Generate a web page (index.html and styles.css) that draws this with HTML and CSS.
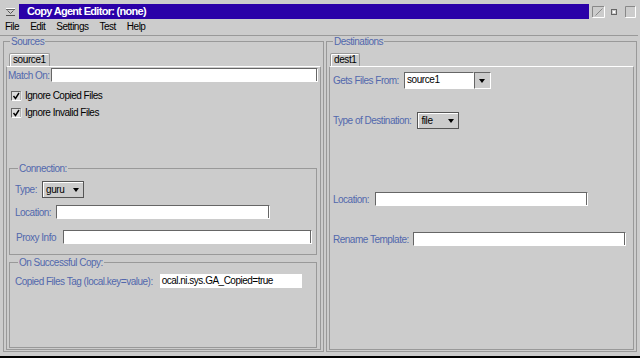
FILE: index.html
```html
<!DOCTYPE html>
<html>
<head>
<meta charset="utf-8">
<link rel="stylesheet" href="styles.css">
</head>
<body>
<div class="window">
  <div class="titlebar">
    <div class="winmenu">
      <svg width="19" height="20" viewBox="0 0 19 20">
        <path d="M6 8.5H15" stroke="#fff" fill="none"/>
        <path d="M6 9.5H15" stroke="#666" fill="none"/>
        <path d="M7.5 10.5L10.5 13.5L13.5 10.5" stroke="#555" fill="none"/>
        <path d="M6 15.5H15" stroke="#555" fill="none"/>
      </svg>
    </div>
    <div class="title">Copy Agent Editor: (none)</div>
    <div class="wbtns">
      <svg width="51" height="20" viewBox="0 0 51 20">
        <path d="M3.5 17V6.5H15" stroke="#888" fill="none"/>
        <path d="M15.5 6.5V17.5H3.5" stroke="#fff" fill="none"/>
        <path d="M6.5 15.5L13.5 8.5" stroke="#888" fill="none"/>
        <rect x="22.5" y="9.5" width="5" height="5" stroke="#666" fill="#fff"/>
        <rect x="23.5" y="10.5" width="3" height="3" stroke="#ccc" fill="none"/>
        <path d="M36.5 17V6.5H46" stroke="#888" fill="none"/>
        <path d="M46.5 6.5V17.5H36.5" stroke="#fff" fill="none"/>
      </svg>
    </div>
  </div>
  <div class="menubar">
    <span>File</span><span>Edit</span><span>Settings</span><span>Test</span><span>Help</span>
  </div>
  <div class="sep"></div>
  <div class="main">
    <fieldset class="panel sources">
      <legend>Sources</legend>
      <div class="tabs"><div class="tab">source1</div></div>
      <div class="tabpane">
        <div class="row match">
          <span class="lbl">Match On:</span>
          <div class="field grow"></div>
        </div>
        <div class="check first">
          <svg width="11" height="10" viewBox="0 0 11 10"><rect x="0.5" y="0.5" width="9" height="9" fill="#dcdcdc" stroke="#666"/><path d="M10 0.5V9.5H0.5" stroke="#fff" fill="none"/><path d="M2.5 5L4.5 7.5L8 2" stroke="#000" stroke-width="1.4" fill="none"/></svg>
          <span>Ignore Copied Files</span>
        </div>
        <div class="check">
          <svg width="11" height="10" viewBox="0 0 11 10"><rect x="0.5" y="0.5" width="9" height="9" fill="#dcdcdc" stroke="#666"/><path d="M10 0.5V9.5H0.5" stroke="#fff" fill="none"/><path d="M2.5 5L4.5 7.5L8 2" stroke="#000" stroke-width="1.4" fill="none"/></svg>
          <span>Ignore Invalid Files</span>
        </div>
        <fieldset class="group conn">
          <legend>Connection:</legend>
          <div class="row tall">
            <span class="lbl">Type:</span>
            <div class="combo small"><span>guru</span><i class="tri"></i></div>
          </div>
          <div class="row gap7">
            <span class="lbl">Location:</span>
            <div class="field w214"></div>
          </div>
          <div class="row gap11 proxy">
            <span class="lbl">Proxy Info</span>
            <div class="field grow"></div>
          </div>
        </fieldset>
        <fieldset class="group copy">
          <legend>On Successful Copy:</legend>
          <div class="row">
            <span class="lbl">Copied Files Tag (local.key=value):</span>
            <div class="field plain w142">ocal.ni.sys.GA_Copied=true</div>
          </div>
        </fieldset>
      </div>
    </fieldset>
    <fieldset class="panel dests">
      <legend>Destinations</legend>
      <div class="tabs"><div class="tab dtab">dest1</div></div>
      <div class="tabpane dpane">
        <div class="row tall gets">
          <span class="lbl">Gets Files From:</span>
          <div class="ecombo"><div class="etext">source1</div><div class="ebtn"><i class="tri"></i></div></div>
        </div>
        <div class="row tall dtype">
          <span class="lbl">Type of Destination:</span>
          <div class="combo small"><span>file</span><i class="tri"></i></div>
        </div>
        <div class="row dloc">
          <span class="lbl">Location:</span>
          <div class="field w213"></div>
        </div>
        <div class="row dren">
          <span class="lbl">Rename Template:</span>
          <div class="field w213"></div>
        </div>
      </div>
    </fieldset>
  </div>
  <div class="bottom"></div>
</div>
</body>
</html>
```

FILE: styles.css
```css
* { box-sizing: border-box; }
html, body { margin: 0; padding: 0; }
body {
  width: 640px;
  height: 358px;
  overflow: hidden;
  background: #cccccc;
  font-family: "Liberation Sans", Arial, sans-serif;
  font-size: 10px;
  color: #000;
}
.window { display: flex; flex-direction: column; height: 358px; }

.titlebar { display: flex; height: 20px; flex: none; }
.winmenu { width: 19px; height: 20px; }
.winmenu svg, .wbtns svg { display: block; }
.title {
  margin-top: 4px;
  width: 570px;
  height: 15px;
  background: #2a00a8;
  color: #fff;
  font-weight: bold;
  font-size: 11px;
  line-height: 15px;
  padding-left: 8px;
  letter-spacing: -0.7px;
  white-space: nowrap;
}

.menubar {
  display: flex;
  gap: 11px;
  height: 15px;
  padding-left: 5px;
  line-height: 14px;
  letter-spacing: -0.5px;
  flex: none;
}
.sep { height: 1px; background: #999; flex: none; margin-right: 2px; }

.main { display: flex; align-items: flex-start; padding-left: 3px; height: 320px; flex: none; }
.bottom { height: 2px; background: #000; flex: none; }

fieldset { margin: 0; padding: 0; border: 1px solid #999; min-width: 0; }
legend {
  padding: 0 1px;
  font-size: 10px;
  line-height: 11px;
  color: #5268ac;
  letter-spacing: -0.5px;
  white-space: nowrap;
}
.panel { height: 316px; padding: 6px 2px 1px 2px; }
.panel > legend { margin-left: 4px; }
.sources { width: 321px; }
.dests { width: 311px; margin-left: 2px; }

.tabs { display: flex; height: 13px; }
.tab {
  margin-left: 3px;
  height: 13px;
  padding: 0 3px;
  line-height: 12px;
  border: 1px solid #999;
  border-bottom: none;
  border-radius: 2px 2px 0 0;
  box-shadow: inset 1px 1px 0 #fff;
  letter-spacing: -0.4px;
}
.tab.dtab { margin-left: 1px; }

.tabpane {
  height: 284px;
  border: 1px solid #999;
  border-top-color: #fff;
}

.row { display: flex; align-items: center; height: 14px; }
.row.tall { height: 17px; }
.lbl { color: #5268ac; letter-spacing: -0.5px; white-space: nowrap; }

.field {
  height: 14px;
  background: #fff;
  border: 1px solid;
  border-color: #666 #fff #fff #666;
  box-shadow: inset -1px 0 0 #666;
  margin-left: 5px;
}
.field.plain {
  border-color: #fff;
  box-shadow: none;
  line-height: 12px;
  padding-left: 1px;
  margin-left: 7px;
  letter-spacing: -0.5px;
  white-space: nowrap;
  overflow: hidden;
}
.grow { flex: 1; }
.w214 { width: 214px; }
.w213 { width: 213px; }
.w142 { width: 142px; }

.match { margin-top: 1px; padding: 0 2px 0 1px; }
.match .field { margin-left: 1px; }

.check { display: flex; align-items: center; gap: 3px; height: 17px; margin-left: 4px; letter-spacing: -0.5px; }
.check.first { margin-top: 5px; }
.check svg { display: block; }

.group { padding: 7px 4px 0 5px; }
.group > legend { margin-left: 3px; }
.conn { margin: 42px 3px 0 2px; height: 92px; }
.copy { margin: 2px 3px 0 2px; height: 91px; padding-top: 6px; }
.gap7 { margin-top: 7px; }
.gap11 { margin-top: 11px; }
.proxy .lbl { margin-left: 1px; }
.proxy .field { margin-left: 7px; }

.combo {
  display: flex;
  align-items: center;
  height: 17px;
  border: 1px solid #555;
  box-shadow: inset 1px 1px 0 #fff;
  padding: 0 4px 0 3px;
  margin-left: 5px;
  letter-spacing: -0.4px;
}
.combo.small { width: 42px; }
.tri {
  display: block;
  width: 0;
  height: 0;
  margin-left: auto;
  border-left: 3.5px solid transparent;
  border-right: 3.5px solid transparent;
  border-top: 4px solid #000;
}

.dpane { padding-left: 3px; }
.gets { margin-top: 5px; }
.ecombo { display: flex; height: 17px; width: 87px; margin-left: 5px; }
.etext {
  flex: 1;
  background: #fff;
  border: 1px solid;
  border-color: #666 #fff #fff #666;
  line-height: 14px;
  padding-left: 2px;
  letter-spacing: -0.4px;
}
.ebtn {
  width: 17px;
  border: 1px solid #666;
  border-right-color: #fff;
  border-bottom-color: #fff;
  display: flex;
  align-items: center;
  justify-content: center;
}
.ebtn .tri { margin-left: 0; }
.dtype { margin-top: 23px; }
.dtype .combo { margin-left: 6px; }
.dloc { margin-top: 63px; }
.dloc .field { margin-left: 6px; }
.dren { margin-top: 26px; }
.dren .field { margin-left: 4px; }
```
